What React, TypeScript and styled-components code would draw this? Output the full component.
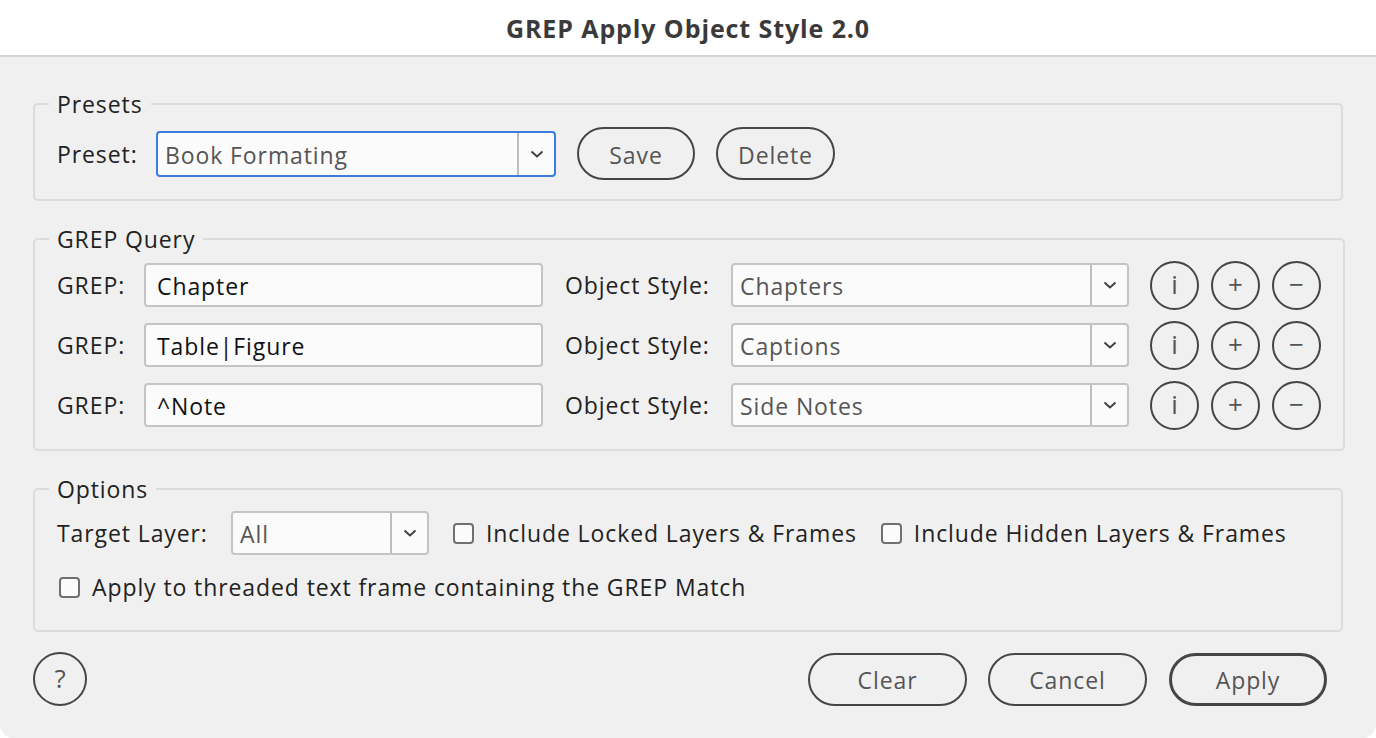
import React from 'react';
import styled, { createGlobalStyle } from 'styled-components';

const GlobalStyle = createGlobalStyle`
  html, body {
    margin: 0;
    padding: 0;
    background: #ffffff;
  }
  body {
    font-family: "Open Sans", "Noto Sans", sans-serif;
    letter-spacing: 0.9px;
  }
`;

const Window = styled.div`
  width: 1376px;
  height: 738px;
  display: flex;
  flex-direction: column;
  overflow: hidden;
`;

const TitleBar = styled.div`
  height: 55px;
  flex: 0 0 auto;
  display: flex;
  align-items: center;
  justify-content: center;
  border-bottom: 2px solid #d4d4d4;
  background: #ffffff;
`;

const Title = styled.h1`
  margin: 0;
  font-size: 25px;
  font-weight: 700;
  color: #3a3a3a;
`;

const Body = styled.div`
  flex: 1;
  background: #f0f0f0;
  border-radius: 0 0 14px 14px;
  padding: 32px 33px 0 33px;
  display: flex;
  flex-direction: column;
  gap: 23px;
`;

const Group = styled.fieldset<{ $pt: number; $pb: number }>`
  margin: 0;
  border: 2px solid #dcdcdc;
  border-radius: 5px;
  padding: ${(p) => p.$pt}px 22px ${(p) => p.$pb}px 22px;
  display: flex;
  flex-direction: column;
  gap: 12px;
`;

const Legend = styled.legend`
  padding: 0 8px;
  margin-left: -8px;
  font-size: 23px;
  line-height: 30px;
  color: #222;
`;

const Row = styled.div<{ $h?: number }>`
  display: flex;
  align-items: center;
  height: ${(p) => p.$h ?? 48}px;
`;

const Label = styled.span<{ $w: number; $ml?: number }>`
  width: ${(p) => p.$w}px;
  margin-left: ${(p) => p.$ml ?? 0}px;
  flex: 0 0 auto;
  font-size: 23px;
  color: #222;
  white-space: nowrap;
`;

const TextInput = styled.div<{ $w: number }>`
  width: ${(p) => p.$w}px;
  height: 44px;
  box-sizing: border-box;
  border: 2px solid #c4c4c4;
  border-radius: 4px;
  background: #fbfbfb;
  display: flex;
  align-items: center;
  padding: 2px 11px 0 11px;
  font-size: 23px;
  color: #111;
  white-space: nowrap;
`;

const SelectBox = styled.div<{ $w: number; $focus?: boolean }>`
  width: ${(p) => p.$w}px;
  height: ${(p) => (p.$focus ? 46 : 44)}px;
  box-sizing: border-box;
  border: 2px solid ${(p) => (p.$focus ? '#3b7ddd' : '#c4c4c4')};
  border-radius: 4px;
  background: #fbfbfb;
  display: flex;
  align-items: stretch;
  font-size: 23px;
  color: #555;
`;

const SelectValue = styled.span`
  flex: 1;
  display: flex;
  align-items: center;
  padding: 2px 0 0 7px;
  white-space: nowrap;
  overflow: hidden;
`;

const SelectArrow = styled.span`
  width: 35px;
  flex: 0 0 auto;
  border-left: 2px solid #bdbdbd;
  display: flex;
  align-items: center;
  justify-content: center;
`;

const PillButton = styled.button<{ $w: number; $default?: boolean; $ml?: number }>`
  width: ${(p) => p.$w}px;
  height: 53px;
  margin-left: ${(p) => p.$ml ?? 0}px;
  box-sizing: border-box;
  border: ${(p) => (p.$default ? 3 : 2)}px solid #454545;
  border-radius: 27px;
  background: transparent;
  font-family: inherit;
  letter-spacing: inherit;
  font-size: 23px;
  color: #555;
  padding: 2px 0 0 0;
  flex: 0 0 auto;
`;

const CircleButton = styled.button<{ $size?: number; $ml?: number }>`
  width: ${(p) => p.$size ?? 49}px;
  height: ${(p) => p.$size ?? 49}px;
  margin-left: ${(p) => p.$ml ?? 0}px;
  box-sizing: border-box;
  border: 2px solid #454545;
  border-radius: 50%;
  background: transparent;
  font-family: inherit;
  font-size: 26px;
  line-height: 1;
  color: #555;
  padding: 0 0 2px 0;
  flex: 0 0 auto;
  display: flex;
  align-items: center;
  justify-content: center;
`;

const Check = styled.span`
  width: 21px;
  height: 21px;
  box-sizing: border-box;
  border: 2px solid #707070;
  border-radius: 4px;
  background: #fbfbfb;
  flex: 0 0 auto;
`;

const CheckItem = styled.label<{ $ml?: number }>`
  display: flex;
  align-items: center;
  gap: 12px;
  margin-left: ${(p) => p.$ml ?? 0}px;
  font-size: 23px;
  color: #222;
  white-space: nowrap;
`;

const Footer = styled.div`
  display: flex;
  align-items: center;
  height: 54px;
  margin-top: -3px;
  padding-right: 16px;
`;

const Spacer = styled.div`
  flex: 1;
`;

const Chevron = () => (
  <svg width="16" height="10" viewBox="0 0 16 10">
    <path d="M2.5 2.5 L8 7.5 L13.5 2.5" fill="none" stroke="#3c3c3c" strokeWidth="1.8" />
  </svg>
);

const Select: React.FC<{ w: number; value: string; focus?: boolean }> = ({ w, value, focus }) => (
  <SelectBox $w={w} $focus={focus}>
    <SelectValue>{value}</SelectValue>
    <SelectArrow>
      <Chevron />
    </SelectArrow>
  </SelectBox>
);

const queries = [
  { grep: 'Chapter', style: 'Chapters' },
  { grep: 'Table|Figure', style: 'Captions' },
  { grep: '^Note', style: 'Side Notes' },
];

export default function App() {
  return (
    <Window>
      <GlobalStyle />
      <TitleBar>
        <Title>GREP Apply Object Style 2.0</Title>
      </TitleBar>
      <Body>
        <Group $pt={8} $pb={19}>
          <Legend>Presets</Legend>
          <Row $h={53}>
            <Label $w={99}>Preset:</Label>
            <Select w={400} value="Book Formating" focus />
            <PillButton $w={118} $ml={21}>Save</PillButton>
            <PillButton $w={119} $ml={21}>Delete</PillButton>
          </Row>
        </Group>

        <Group $pt={7} $pb={20}>
          <Legend>GREP Query</Legend>
          {queries.map((q) => (
            <Row key={q.grep}>
              <Label $w={87}>GREP:</Label>
              <TextInput $w={399}>{q.grep}</TextInput>
              <Label $w={166} $ml={22}>Object Style:</Label>
              <Select w={398} value={q.style} />
              <CircleButton $ml={21}>i</CircleButton>
              <CircleButton $ml={12}>+</CircleButton>
              <CircleButton $ml={12}>−</CircleButton>
            </Row>
          ))}
        </Group>

        <Group $pt={7} $pb={23}>
          <Legend>Options</Legend>
          <Row $h={44}>
            <Label $w={174}>Target Layer:</Label>
            <Select w={198} value="All" />
            <CheckItem $ml={24}>
              <Check />
              Include Locked Layers &amp; Frames
            </CheckItem>
            <CheckItem $ml={24}>
              <Check />
              Include Hidden Layers &amp; Frames
            </CheckItem>
          </Row>
          <Row $h={40}>
            <CheckItem $ml={2}>
              <Check />
              Apply to threaded text frame containing the GREP Match
            </CheckItem>
          </Row>
        </Group>

        <Footer>
          <CircleButton $size={54}>?</CircleButton>
          <Spacer />
          <PillButton $w={159}>Clear</PillButton>
          <PillButton $w={159} $ml={21}>Cancel</PillButton>
          <PillButton $w={158} $ml={22} $default>Apply</PillButton>
        </Footer>
      </Body>
    </Window>
  );
}
